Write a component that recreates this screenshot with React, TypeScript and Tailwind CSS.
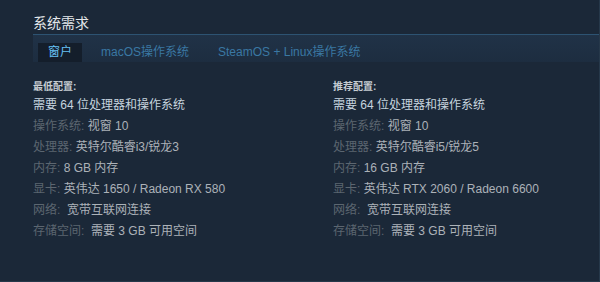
import React from 'react';

const font = { fontFamily: '"Liberation Sans", "Noto Sans CJK SC", sans-serif' };

const minimum: [string, string][] = [
  ['操作系统:', '视窗 10'],
  ['处理器:', '英特尔酷睿i3/锐龙3'],
  ['内存:', '8 GB 内存'],
  ['显卡:', '英伟达 1650 / Radeon RX 580'],
  ['网络:', '\u00a0宽带互联网连接'],
  ['存储空间:', '\u00a0需要 3 GB 可用空间'],
];

const recommended: [string, string][] = [
  ['操作系统:', '视窗 10'],
  ['处理器:', '英特尔酷睿i5/锐龙5'],
  ['内存:', '16 GB 内存'],
  ['显卡:', '英伟达 RTX 2060 / Radeon 6600'],
  ['网络:', '\u00a0宽带互联网连接'],
  ['存储空间:', '\u00a0需要 3 GB 可用空间'],
];

function Column({ title, rows }: { title: string; rows: [string, string][] }) {
  return (
    <div className="w-[300px] shrink-0">
      <div className="h-[16px] text-[10px] leading-[16px] font-bold text-[#c6ccd2]">{title}</div>
      <div className="text-[12px] leading-[21px] text-[#c6d4df]">需要 64 位处理器和操作系统</div>
      {rows.map(([label, value]) => (
        <div key={label} className="text-[12px] leading-[21px] whitespace-pre">
          <span className="text-[#5c6670]">{label}</span>
          <span className="text-[#acb2b8]"> {value}</span>
        </div>
      ))}
    </div>
  );
}

export default function App() {
  return (
    <div
      className="w-[600px] h-[282px] overflow-hidden bg-[#1b2838] pl-[33px] pt-[12px] border-r border-b border-[#26384a]"
      style={font}
    >
      <h2 className="h-[22px] text-[14px] leading-[22px] text-[#e5e8eb]">系统需求</h2>

      {/* Tabs */}
      <div className="h-[28px] border-t border-[#2d5372] bg-gradient-to-b from-[#203247] to-[#1d2d40] pt-[8px] pl-[5px] flex gap-[9px]">
        <div className="h-[19px] px-[10px] bg-[#141e2b] text-[12px] leading-[19px] text-[#67c1f5]">窗户</div>
        <div className="h-[19px] px-[10px] text-[12px] leading-[19px] text-[#3a78a3]">macOS操作系统</div>
        <div className="h-[19px] px-[10px] text-[12px] leading-[19px] text-[#3a78a3]">SteamOS + Linux操作系统</div>
      </div>

      <div className="flex mt-[17px]">
        <Column title="最低配置:" rows={minimum} />
        <Column title="推荐配置:" rows={recommended} />
      </div>
    </div>
  );
}
